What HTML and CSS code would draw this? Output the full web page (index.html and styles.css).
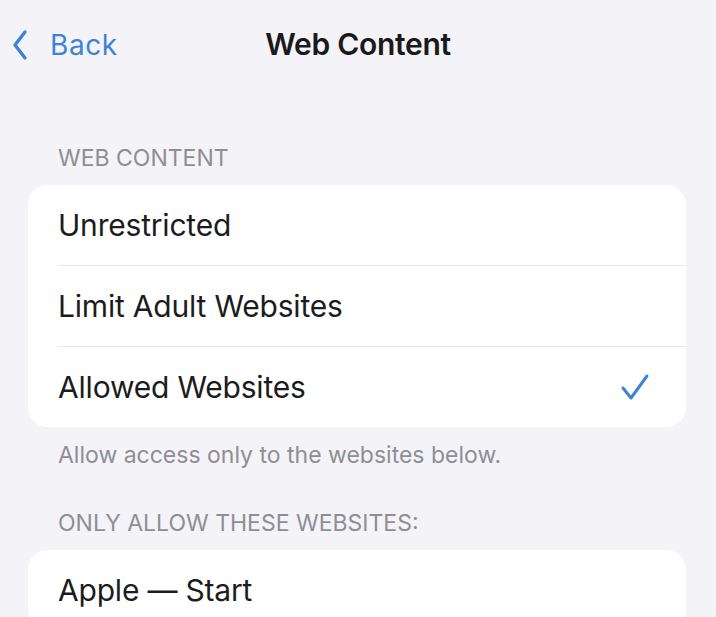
FILE: index.html
```html
<!DOCTYPE html>
<html>
<head>
<meta charset="utf-8">
<link rel="stylesheet" href="styles.css">
</head>
<body>
<div class="screen">
  <header class="nav">
    <a class="back">
      <svg class="chev" width="16" height="32" viewBox="0 0 16 32"><path d="M13 3 L3 16 L13 29" fill="none" stroke="#3f83d7" stroke-width="3.4" stroke-linecap="round" stroke-linejoin="round"/></svg>
      <span>Back</span>
    </a>
    <h1 class="title">Web Content</h1>
  </header>

  <section class="group first">
    <div class="group-header">WEB CONTENT</div>
    <div class="card">
      <div class="row"><span>Unrestricted</span></div>
      <div class="row"><span>Limit Adult Websites</span></div>
      <div class="row"><span>Allowed Websites</span>
        <svg class="check" width="30" height="28" viewBox="0 0 30 28"><path d="M3 15 L11 25 L27 3" fill="none" stroke="#3f83d7" stroke-width="3" stroke-linecap="round" stroke-linejoin="round"/></svg>
      </div>
    </div>
    <div class="group-footer">Allow access only to the websites below.</div>
  </section>

  <section class="group">
    <div class="group-header">ONLY ALLOW THESE WEBSITES:</div>
    <div class="card">
      <div class="row"><span>Apple — Start</span></div>
    </div>
  </section>
</div>
</body>
</html>
```

FILE: styles.css
```css
html, body {
  margin: 0;
  padding: 0;
  background: #f4f4f8;
}
body {
  font-family: Inter, "Noto Sans", sans-serif;
  color: #1c1c1e;
  width: 716px;
  height: 617px;
  overflow: hidden;
}
.screen {
  display: flex;
  flex-direction: column;
}
.nav {
  position: relative;
  height: 88px;
  display: flex;
  align-items: center;
  justify-content: center;
}
.back {
  position: absolute;
  left: 12px;
  top: 28px;
  display: flex;
  align-items: center;
  gap: 22px;
  color: #3f83d7;
  font-size: 28px;
  letter-spacing: 0.6px;
}
.chev { display: block; }
.title {
  margin: 0;
  font-size: 30px;
  font-weight: 600;
  letter-spacing: -0.3px;
  color: #1a1a1c;
}
.group {
  padding: 0 30px 0 28px;
}
.group.first { margin-top: 56px; }
.group-header {
  padding-left: 30px;
  font-size: 23px;
  color: #8e8e93;
  letter-spacing: 0;
  height: 41px;
}
.group-footer {
  padding-left: 30px;
  margin-top: 14px;
  font-size: 23px;
  color: #8e8e93;
  height: 68px;
}
.card {
  background: #fff;
  border-radius: 20px;
  overflow: hidden;
}
.row {
  height: 80px;
  margin-left: 30px;
  padding-right: 36px;
  display: flex;
  align-items: center;
  justify-content: space-between;
  font-size: 30px;
  letter-spacing: -0.2px;
  border-bottom: 1px solid #e6e6ea;
}
.row:last-child { border-bottom: none; }
.check { display: block; }
```
